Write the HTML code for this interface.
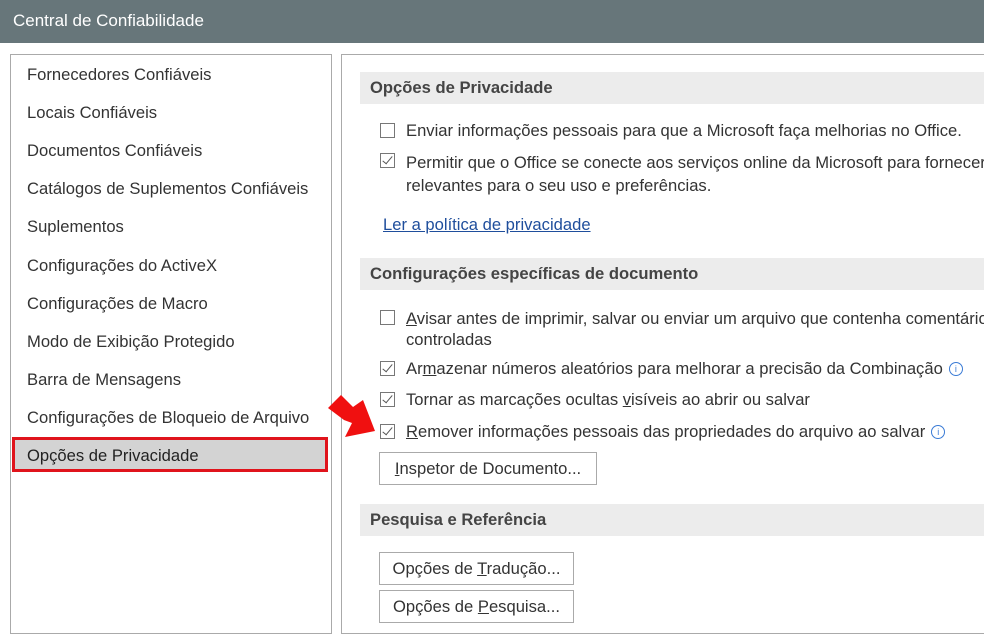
<html><head><style>
body{margin:0;width:984px;height:627px;background:#fff;font-family:"Liberation Sans",sans-serif;font-size:16.6px;color:#333;position:relative;overflow:hidden}
.a{position:absolute;white-space:nowrap}
.title{left:0;top:0;width:984px;height:43px;background:#67767a;color:#fff;font-size:17px}
.li{left:27px}
.cb{position:absolute;left:380px;width:15px;height:15px;border:1px solid #777;background:#fff;box-sizing:border-box}
.ck::after{content:"";position:absolute;left:4px;top:0px;width:4px;height:9px;border:solid #555;border-width:0 1.5px 1.5px 0;transform:rotate(40deg)}
.t{left:406px}
.hd{left:360px;width:624px;height:32px;background:#ececec;font-weight:bold;color:#444}
.hd span{position:absolute;left:10px;top:6px}
.btn{border:1px solid #aaa;background:#fff;height:33px;box-sizing:border-box;left:379px;text-align:center;line-height:31px}
.i{display:inline-block;width:12px;height:12px;border:1px solid #3a7bd5;border-radius:50%;font-size:9px;line-height:12px;text-align:center;color:#3a7bd5;margin-left:6px;vertical-align:2px}
</style></head><body>
<div class="a title"><span style="position:absolute;left:13px;top:11px">Central de Confiabilidade</span></div>
<div class="a" style="left:10px;top:54px;width:322px;height:580px;border:1px solid #aaa;box-sizing:border-box"></div>
<div class="a" style="left:341px;top:54px;width:650px;height:580px;border:1px solid #aaa;box-sizing:border-box"></div>
<div class="a li" style="top:65px">Fornecedores Confiáveis</div>
<div class="a li" style="top:103px">Locais Confiáveis</div>
<div class="a li" style="top:141px">Documentos Confiáveis</div>
<div class="a li" style="top:179px">Catálogos de Suplementos Confiáveis</div>
<div class="a li" style="top:217px">Suplementos</div>
<div class="a li" style="top:256px">Configurações do ActiveX</div>
<div class="a li" style="top:294px">Configurações de Macro</div>
<div class="a li" style="top:332px">Modo de Exibição Protegido</div>
<div class="a li" style="top:370px">Barra de Mensagens</div>
<div class="a li" style="top:408px">Configurações de Bloqueio de Arquivo</div>
<div class="a" style="left:12px;top:437px;width:316px;height:35px;background:#d3d3d3;border:3px solid #e0141c;box-sizing:border-box"></div>
<div class="a li" style="top:446px;color:#222">Opções de Privacidade</div>

<div class="a hd" style="top:72px"><span>Opções de Privacidade</span></div>
<div class="cb" style="top:123px"></div><div class="a t" style="top:121px">Enviar informações pessoais para que a Microsoft faça melhorias no Office.</div>
<div class="cb ck" style="top:153px"></div><div class="a t" style="top:151px;line-height:23px">Permitir que o Office se conecte aos serviços online da Microsoft para fornecer<br>relevantes para o seu uso e preferências.</div>
<div class="a" style="left:383px;top:215px;color:#1f4e9c;text-decoration:underline">Ler a política de privacidade</div>
<div class="a hd" style="top:258px"><span>Configurações específicas de documento</span></div>
<div class="cb" style="top:310px"></div><div class="a t" style="top:308px;line-height:21px"><u>A</u>visar antes de imprimir, salvar ou enviar um arquivo que contenha comentários<br>controladas</div>
<div class="cb ck" style="top:361px"></div><div class="a t" style="top:359px">Ar<u>m</u>azenar números aleatórios para melhorar a precisão da Combinação<span class="i">i</span></div>
<div class="cb ck" style="top:392px"></div><div class="a t" style="top:390px">Tornar as marcações ocultas <u>v</u>isíveis ao abrir ou salvar</div>
<div class="cb ck" style="top:424px"></div><div class="a t" style="top:422px"><u>R</u>emover informações pessoais das propriedades do arquivo ao salvar<span class="i">i</span></div>
<div class="a btn" style="top:452px;width:218px"><u>I</u>nspetor de Documento...</div>
<div class="a hd" style="top:504px"><span>Pesquisa e Referência</span></div>
<div class="a btn" style="top:552px;width:195px">Opções de <u>T</u>radução...</div>
<div class="a btn" style="top:590px;width:195px">Opções de <u>P</u>esquisa...</div>
<svg class="a" style="left:0;top:0" width="984" height="627"><polygon points="328,408 341,395 353,407 363,400 375,431 345,437 352,423 344,420" fill="#f01010"/></svg>
</body></html>
